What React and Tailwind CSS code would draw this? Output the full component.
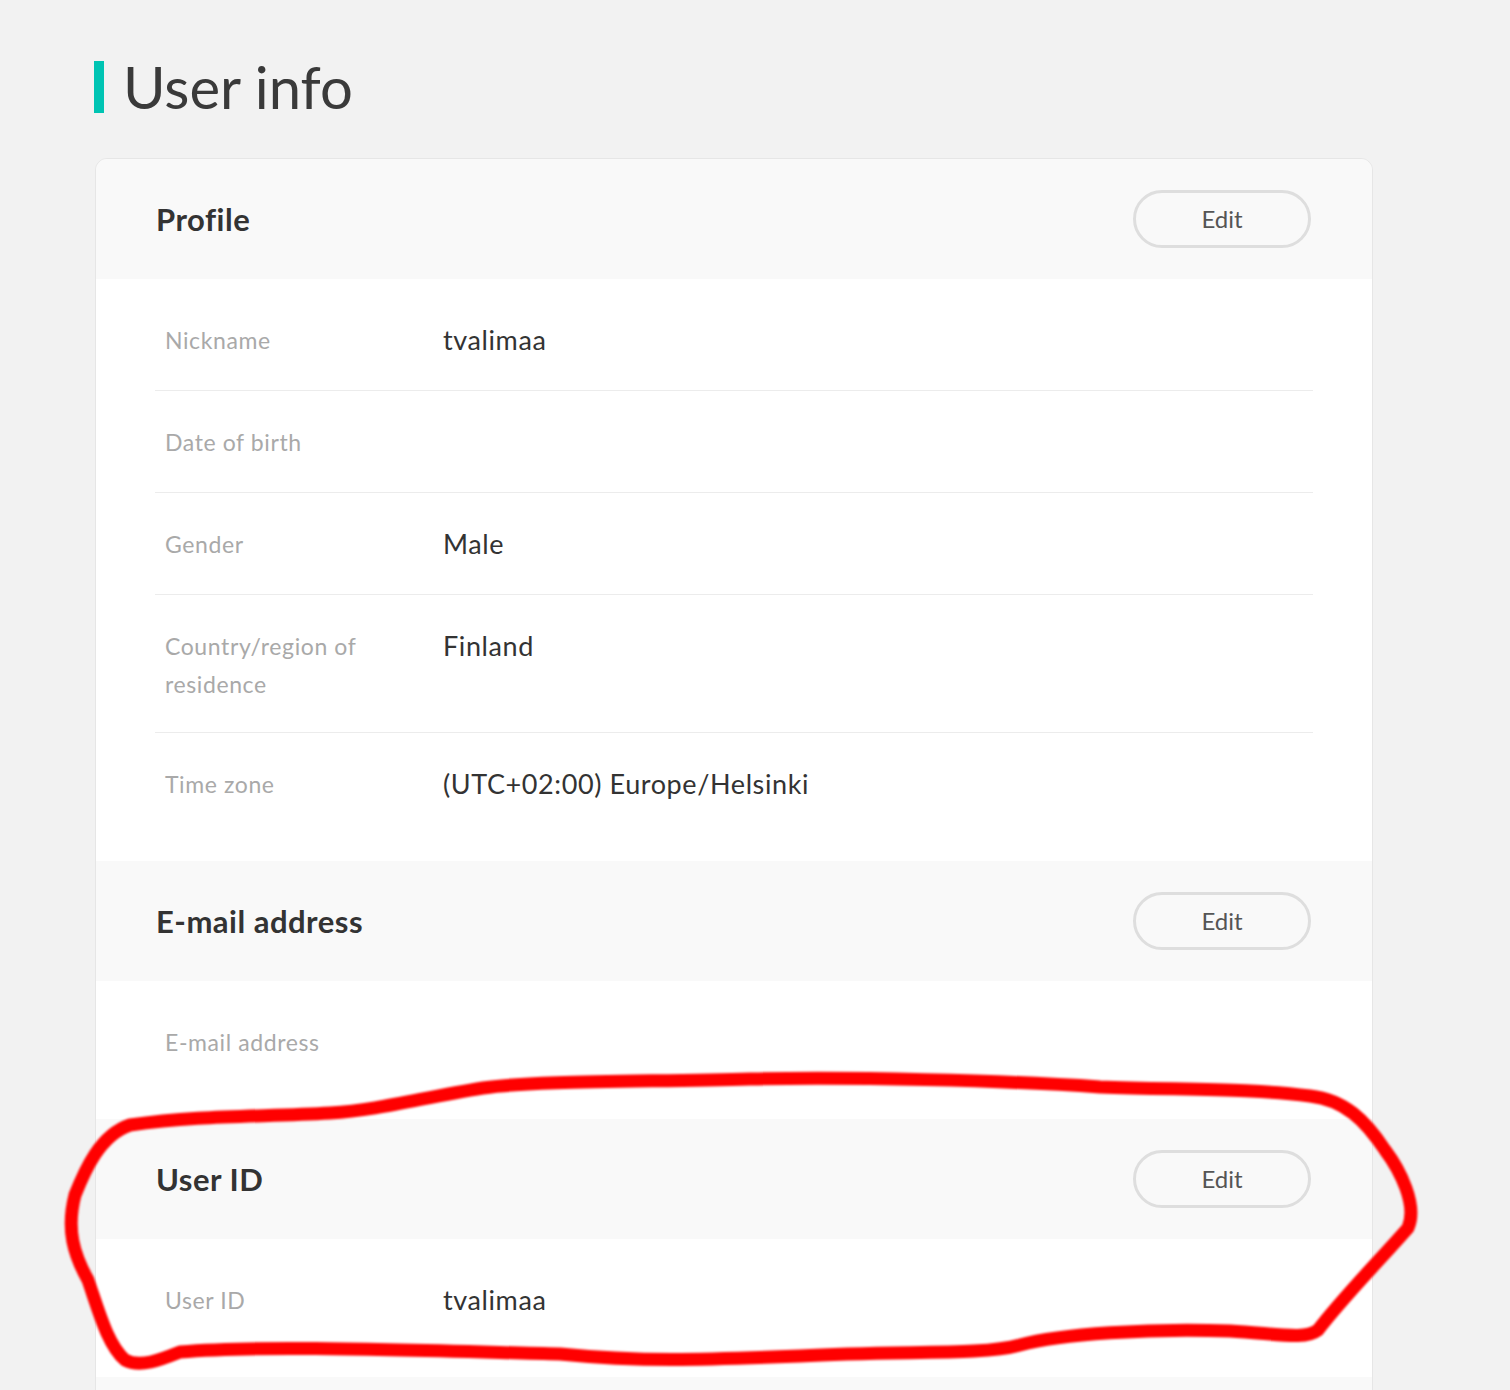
import React from 'react';

const font = { fontFamily: 'Lato, "Open Sans", sans-serif' };

const sections = [
  {
    title: 'Profile',
    rows: [
      { label: 'Nickname', value: 'tvalimaa' },
      { label: 'Date of birth', value: '' },
      { label: 'Gender', value: 'Male' },
      { label: 'Country/region of residence', value: 'Finland' },
      { label: 'Time zone', value: '(UTC+02:00) Europe/Helsinki' },
    ],
  },
  { title: 'E-mail address', rows: [{ label: 'E-mail address', value: '' }] },
  { title: 'User ID', rows: [{ label: 'User ID', value: 'tvalimaa' }] },
];

function Section({ title, rows }) {
  return (
    <div>
      <div className="flex items-center justify-between h-[120px] bg-[#f9f9f9] pl-[60px] pr-[61px]">
        <h2 className="text-[31px] font-bold tracking-[0.5px] text-[#333]">{title}</h2>
        <button className="w-[178px] h-[58px] rounded-full border-[3px] border-[#dedede] text-[24px] text-[#555]">
          Edit
        </button>
      </div>
      <div className="bg-white px-[59px] pt-[10px] pb-[27px]">
        {rows.map((r, i) => (
          <div
            key={r.label}
            className={`flex items-start px-[10px] pt-[29px] pb-[28px] ${i < rows.length - 1 ? 'border-b border-[#ececec]' : ''}`}
          >
            <div className="w-[278px] shrink-0 pr-[50px] pt-[2px] text-[23px] tracking-[0.6px] leading-[40px] text-[#a9a9a9]">
              {r.label.includes(' of residence') ? (
                <>
                  Country/region of
                  <br />
                  <span className="block -mt-[2px]">residence</span>
                </>
              ) : (
                r.label
              )}
            </div>
            <div className="min-h-[44px] text-[27px] tracking-[0.6px] leading-[44px] text-[#333]">{r.value}</div>
          </div>
        ))}
      </div>
    </div>
  );
}

export default function App() {
  return (
    <div className="relative w-[1510px] h-[1390px] overflow-hidden bg-[#f2f2f2]" style={font}>
      <div className="pt-[61px] pl-[94px]">
        <div className="flex items-center h-[52px] mb-[45px]">
          <div className="w-[10px] h-[52px] bg-[#00c4b3]" />
          <h1 className="ml-[19px] text-[58px] font-normal leading-none text-[#3a3a3a]">User info</h1>
        </div>
        <div className="ml-px w-[1278px] rounded-t-[12px] border border-[#e6e6e6] overflow-hidden">
          {sections.map((s) => (
            <Section key={s.title} {...s} />
          ))}
          <div className="h-[120px] bg-[#f9f9f9]" />
        </div>
      </div>

      <svg
        className="absolute inset-0 pointer-events-none"
        width="1510"
        height="1390"
        viewBox="0 0 1510 1390"
      >
        <defs>
          <filter id="soft">
            <feGaussianBlur stdDeviation="0.8" />
          </filter>
        </defs>
        <path
          d="M 1100 1087 C 1000 1080 850 1077 750 1079 C 650 1082 540 1080 483 1088 C 420 1098 380 1110 330 1113 C 260 1117 200 1115 130 1125 C 100 1135 85 1170 75 1195 C 66 1230 74 1255 88 1280 C 100 1315 108 1345 125 1360 C 140 1368 160 1360 180 1352 C 260 1345 400 1350 560 1354 C 640 1362 700 1360 800 1356 C 900 1350 980 1356 1020 1345 C 1060 1334 1150 1328 1230 1331 C 1280 1334 1305 1340 1318 1330 C 1345 1295 1380 1260 1408 1228 C 1418 1205 1400 1170 1385 1150 C 1365 1120 1345 1100 1310 1096 C 1250 1088 1180 1090 1100 1087 Z"
          fill="none"
          stroke="#ff0000"
          strokeWidth="13"
          strokeLinejoin="round"
          filter="url(#soft)"
        />
      </svg>
    </div>
  );
}
